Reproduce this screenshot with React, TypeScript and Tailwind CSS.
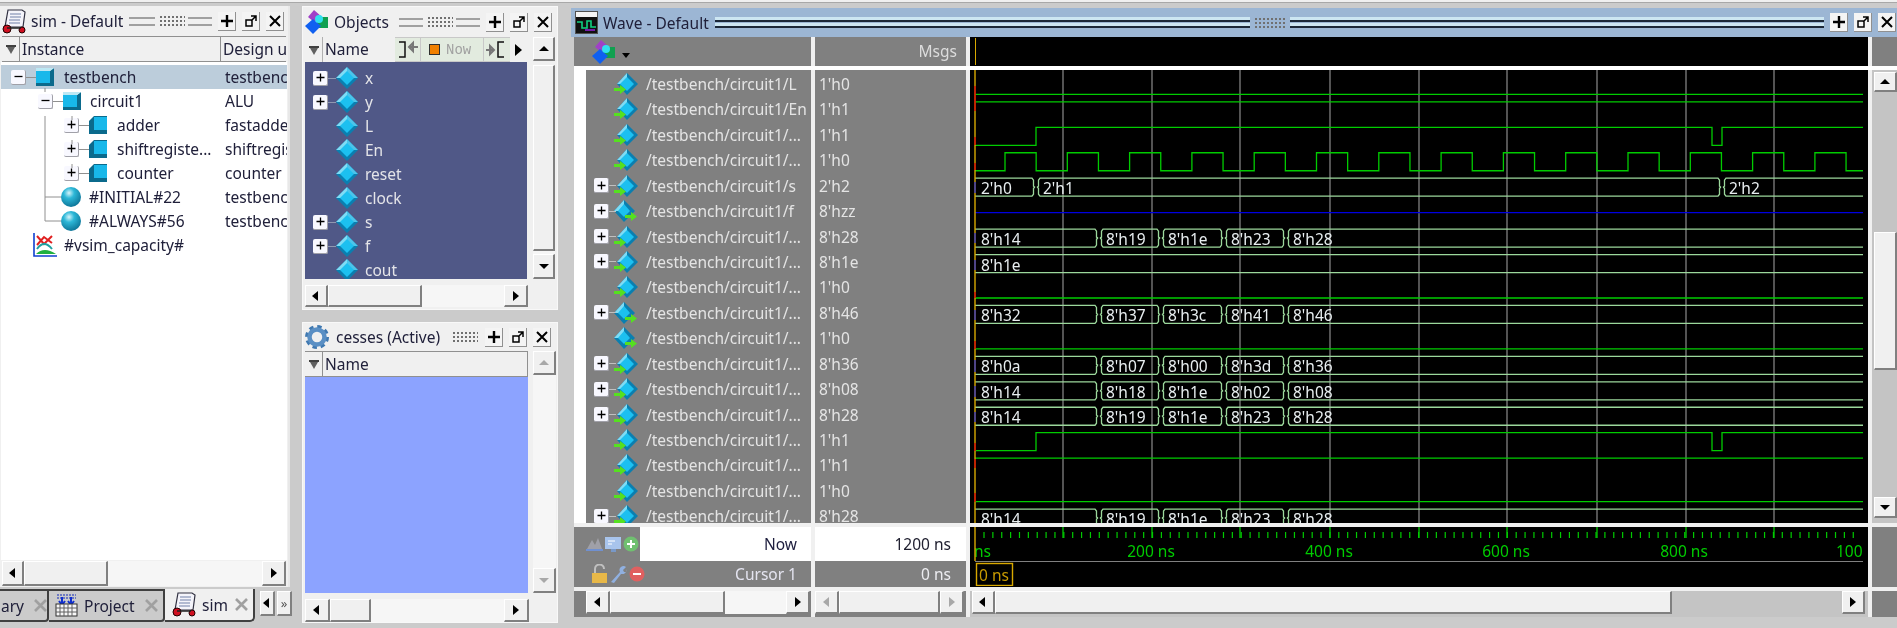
const GRID = [1064, 1153, 1241, 1331, 1420, 1508, 1598, 1687, 1775];
const END = 1864;

type Sig =
  | { kind: "low" | "high" | "z" }
  | { kind: "step" }
  | { kind: "clock" }
  | { kind: "bus"; parts: [number, string][] };

const busA = (p: string[]): [number, string][] => [
  [976, p[0]],
  [1100, p[1]],
  [1162, p[2]],
  [1225, p[3]],
  [1287, p[4]],
];

const ROWS: { name: string; value: string; box?: boolean; out?: boolean; sig: Sig }[] = [
  { name: "/testbench/circuit1/L", value: "1'h0", sig: { kind: "low" } },
  { name: "/testbench/circuit1/En", value: "1'h1", sig: { kind: "high" } },
  { name: "/testbench/circuit1/...", value: "1'h1", sig: { kind: "step" } },
  { name: "/testbench/circuit1/...", value: "1'h0", sig: { kind: "clock" } },
  { name: "/testbench/circuit1/s", value: "2'h2", box: true, sig: { kind: "bus", parts: [[976, "2'h0"], [1037, "2'h1"], [1723, "2'h2"]] } },
  { name: "/testbench/circuit1/f", value: "8'hzz", box: true, out: true, sig: { kind: "z" } },
  { name: "/testbench/circuit1/...", value: "8'h28", box: true, sig: { kind: "bus", parts: busA(["8'h14", "8'h19", "8'h1e", "8'h23", "8'h28"]) } },
  { name: "/testbench/circuit1/...", value: "8'h1e", box: true, sig: { kind: "bus", parts: [[976, "8'h1e"]] } },
  { name: "/testbench/circuit1/...", value: "1'h0", sig: { kind: "low" } },
  { name: "/testbench/circuit1/...", value: "8'h46", box: true, out: true, sig: { kind: "bus", parts: busA(["8'h32", "8'h37", "8'h3c", "8'h41", "8'h46"]) } },
  { name: "/testbench/circuit1/...", value: "1'h0", out: true, sig: { kind: "low" } },
  { name: "/testbench/circuit1/...", value: "8'h36", box: true, sig: { kind: "bus", parts: busA(["8'h0a", "8'h07", "8'h00", "8'h3d", "8'h36"]) } },
  { name: "/testbench/circuit1/...", value: "8'h08", box: true, sig: { kind: "bus", parts: busA(["8'h14", "8'h18", "8'h1e", "8'h02", "8'h08"]) } },
  { name: "/testbench/circuit1/...", value: "8'h28", box: true, sig: { kind: "bus", parts: busA(["8'h14", "8'h19", "8'h1e", "8'h23", "8'h28"]) } },
  { name: "/testbench/circuit1/...", value: "1'h1", sig: { kind: "step" } },
  { name: "/testbench/circuit1/...", value: "1'h1", sig: { kind: "high" } },
  { name: "/testbench/circuit1/...", value: "1'h0", sig: { kind: "low" } },
  { name: "/testbench/circuit1/...", value: "8'h28", box: true, sig: { kind: "bus", parts: busA(["8'h14", "8'h19", "8'h1e", "8'h23", "8'h28"]) } },
];

const CURSOR_MARKS: [number, number, string][] = [
  [86, 111, "#d00000"], [137, 145, "#d00000"], [163, 170, "#d00000"], [182, 193, "#3030c0"],
  [233, 243, "#3030c0"], [260, 270, "#3030c0"], [292, 298, "#d00000"], [310, 320, "#3030c0"],
  [341, 349, "#d00000"], [360, 372, "#3030c0"], [386, 397, "#3030c0"], [412, 422, "#3030c0"],
  [443, 451, "#d00000"], [459, 468, "#d00000"], [493, 502, "#d00000"],
];

const bevel =
  "bg-[#f0f0f0] border-t border-l border-r-2 border-b-2 border-t-white border-l-white border-r-[#808080] border-b-[#808080]";

function Arrow({ dir, off }: { dir: "l" | "r" | "u" | "d"; off?: boolean }) {
  const pts = { l: "8,1 8,11 2,6", r: "3,1 3,11 9,6", u: "1,8 11,8 6,3", d: "1,4 11,4 6,9" }[dir];
  return (
    <svg width="12" height="12" viewBox="0 0 12 12">
      <polygon points={pts} fill={off ? "#a8a8a8" : "#000"} />
    </svg>
  );
}

function ArrowBtn({ dir, off, className }: { dir: "l" | "r" | "u" | "d"; off?: boolean; className: string }) {
  return (
    <div className={`${bevel} flex items-center justify-center shrink-0 ${className}`}>
      <Arrow dir={dir} off={off} />
    </div>
  );
}

function PanelBtn({ type }: { type: "plus" | "pop" | "close" }) {
  return (
    <div className="w-[18px] h-[19px] bg-[#f4f4f4] border-r border-b border-[#909090] flex items-center justify-center shrink-0">
      <svg width="14" height="14" viewBox="0 0 14 14" fill="none" stroke="#000">
        {type === "plus" && <path d="M7 1v12M1 7h12" strokeWidth="2.4" />}
        {type === "close" && <path d="M2 2l10 10M12 2L2 12" strokeWidth="2" />}
        {type === "pop" && <path d="M2 6h6v6H2zM7 2h5v5M12 2L7 7" strokeWidth="1.5" />}
      </svg>
    </div>
  );
}

function Dots({ className }: { className: string }) {
  return <div className={`bg-[radial-gradient(#707070_0.8px,transparent_1px)] bg-[length:4px_4px] shrink-0 ${className}`} />;
}

function Lines({ className }: { className: string }) {
  return <div className={`h-[9px] border-t-2 border-b-2 border-[#a0a0a0] shrink-0 ${className}`} />;
}

function PanelBtns({ gap }: { gap: string }) {
  return (
    <div className={`flex ${gap}`}>
      <PanelBtn type="plus" />
      <PanelBtn type="pop" />
      <PanelBtn type="close" />
    </div>
  );
}

function Plus() {
  return (
    <div className="w-[15px] h-[15px] bg-[#f8f8ff] border-r border-b border-[#a0a0a8] rounded-[2px] flex items-center justify-center shrink-0">
      <svg width="9" height="9" viewBox="0 0 9 9" stroke="#000" strokeWidth="1.3">
        <path d="M4.5 0.5v8M0.5 4.5h8" />
      </svg>
    </div>
  );
}

function Minus() {
  return (
    <div className="w-[15px] h-[15px] bg-[#f8f8ff] border-r border-b border-[#a0a0a8] rounded-[2px] flex items-center justify-center shrink-0">
      <svg width="9" height="9" viewBox="0 0 9 9" stroke="#000" strokeWidth="1.3">
        <path d="M0.5 4.5h8" />
      </svg>
    </div>
  );
}

function Cube({ flip }: { flip?: boolean }) {
  return flip ? (
    <svg width="18" height="18" viewBox="0 0 18 18" className="shrink-0">
      <polygon points="5,0 18,0 18,18 0,18 0,5" fill="#0b6a8c" />
      <rect x="5" y="1" width="13" height="13" fill="#18b8ea" />
    </svg>
  ) : (
    <svg width="18" height="18" viewBox="0 0 18 18" className="shrink-0">
      <polygon points="0,3 14,3 18,0 18,18 0,18" fill="#0b6a8c" />
      <rect x="0" y="3" width="14" height="12" fill="#18b8ea" />
      <polygon points="0,0 18,0 14,3 0,3" fill="#bde8f4" />
    </svg>
  );
}

function Sphere({ id }: { id: string }) {
  return (
    <svg width="20" height="20" viewBox="0 0 20 20" className="shrink-0">
      <defs>
        <radialGradient id={id} cx="0.4" cy="0.3" r="0.75">
          <stop offset="0" stopColor="#d8f4fa" />
          <stop offset="0.35" stopColor="#2db8d8" />
          <stop offset="1" stopColor="#0a6f92" />
        </radialGradient>
      </defs>
      <circle cx="10" cy="10" r="10" fill={`url(#${id})`} />
    </svg>
  );
}

function Diamond() {
  return (
    <svg width="22" height="22" viewBox="0 0 22 22" className="shrink-0">
      <polygon points="11,0 22,11 11,22 0,11" fill="#0a7fb0" />
      <polygon points="11,0 0,11 5,11 11,5" fill="#7fdcf5" />
      <polygon points="11,0 22,11 17,11 11,5" fill="#4cc4ea" />
      <polygon points="11,4 18,11 11,18 4,11" fill="#1cc0f0" />
    </svg>
  );
}

function SignalIcon({ out }: { out?: boolean }) {
  return out ? (
    <svg width="24" height="24" viewBox="0 0 24 24" className="shrink-0">
      <polygon points="10,1 21,12 10,23 0,12" fill="#0a7fb0" />
      <polygon points="10,1 0,12 5,12 10,6" fill="#7fdcf5" />
      <polygon points="10,5 16,12 10,18 4,12" fill="#1cc0f0" />
      <path d="M11 16h6v-3l6 4.5-6 4.5v-3h-6z" fill="#55e020" />
    </svg>
  ) : (
    <svg width="24" height="24" viewBox="0 0 24 24" className="shrink-0">
      <polygon points="13,1 24,12 13,23 3,12" fill="#0a7fb0" />
      <polygon points="13,1 3,12 8,12 13,6" fill="#7fdcf5" />
      <polygon points="13,5 20,12 13,19 6,12" fill="#1cc0f0" />
      <path d="M0 16h6v-3l6 4.5-6 4.5v-3H0z" fill="#55e020" />
    </svg>
  );
}

function ObjectsIcon({ size = 24 }: { size?: number }) {
  return (
    <svg width={size} height={size} viewBox="0 0 24 24" className="shrink-0">
      <polygon points="9,0 17,7 9,12 3,7" fill="#a040c8" />
      <rect x="12" y="7" width="11" height="11" fill="#10a050" />
      <polygon points="8,9 16,16 8,24 0,16" fill="#1060f0" />
      <circle cx="14" cy="9" r="4" fill="#30e0f0" />
    </svg>
  );
}

function SimIcon() {
  return (
    <svg width="25" height="25" viewBox="0 0 25 25" className="shrink-0">
      <path d="M6 1h14l3 2-2 15H3z" fill="#f4f4fa" stroke="#303040" strokeWidth="1.2" />
      <path d="M8 5h11M8 8h11M7 11h11M7 14h11" stroke="#7080a8" strokeWidth="1.2" />
      <circle cx="5" cy="20" r="4" fill="#d01020" stroke="#200" />
      <circle cx="20" cy="21" r="3" fill="#d01020" stroke="#200" />
      <path d="M5 19h14" stroke="#202020" strokeWidth="1.5" />
    </svg>
  );
}

function ProjectIcon() {
  return (
    <svg width="23" height="23" viewBox="0 0 23 23" className="shrink-0">
      <path d="M2 1h19M2 4h19" stroke="#5060c0" strokeWidth="1.5" strokeDasharray="2 1" />
      <path d="M7 3v7M4 7l3 4 3-4M16 3v7M13 7l3 4 3-4" fill="none" stroke="#1030d0" strokeWidth="2" />
      <rect x="1" y="10" width="21" height="12" fill="#f8f8f8" stroke="#303030" />
      <path d="M1 14h21M1 18h21M5 10v12M9 10v12M13 10v12M17 10v12" stroke="#606060" />
    </svg>
  );
}

function CapacityIcon() {
  return (
    <svg width="24" height="24" viewBox="0 0 24 24" className="shrink-0">
      <path d="M1 0v23h23" fill="none" stroke="#1040d0" strokeWidth="1.6" />
      <path d="M4 3l7 8 8-8M4 12l7-8 8 6" fill="none" stroke="#e02020" strokeWidth="2" />
      <path d="M4 16q7-10 15 0" fill="none" stroke="#20a0a0" strokeWidth="2" />
      <path d="M3 21q8-8 20 0z" fill="#20b040" />
    </svg>
  );
}

function GearIcon() {
  return (
    <svg width="24" height="24" viewBox="0 0 24 24" className="shrink-0">
      <circle cx="12" cy="12" r="9.5" fill="none" stroke="#3f78b0" strokeWidth="5" strokeDasharray="4 3.45" />
      <circle cx="12" cy="12" r="7.5" fill="none" stroke="#5a8fc4" strokeWidth="4.5" />
    </svg>
  );
}

function WaveIcon() {
  return (
    <div className="w-[23px] h-[23px] bg-[#f4f4f4] border border-[#505050] flex flex-col justify-end shrink-0">
      <svg width="21" height="16" viewBox="0 0 21 16" className="bg-[#101010]">
        <path d="M1 5h5v6h5V4h4v6h5" fill="none" stroke="#10d080" strokeWidth="1.6" />
        <path d="M9 13h10" stroke="#9020d0" strokeWidth="1.6" />
      </svg>
    </div>
  );
}

function CloseX() {
  return (
    <svg width="13" height="13" viewBox="0 0 13 13" stroke="#a0a0a0" strokeWidth="2.6" className="shrink-0">
      <path d="M1 1l11 11M12 1L1 12" />
    </svg>
  );
}

function HeaderCaret() {
  return (
    <svg width="12" height="12" viewBox="0 0 12 12">
      <path d="M1 2h10v2H1z" fill="#404040" />
      <polygon points="2,4 10,4 6,11" fill="#606060" />
    </svg>
  );
}

function SimPanel() {
  const tree: { label: string; unit: string; pad: string; icon: React.ReactNode; box?: "plus" | "minus"; sel?: boolean; textPad: string }[] = [
    { label: "testbench", unit: "testbench", pad: "pl-[10px]", box: "minus", icon: <Cube />, sel: true, textPad: "ml-[10px]" },
    { label: "circuit1", unit: "ALU", pad: "pl-[37px]", box: "minus", icon: <Cube />, textPad: "ml-[9px]" },
    { label: "adder", unit: "fastadder", pad: "pl-[63px]", box: "plus", icon: <Cube flip />, textPad: "ml-[10px]" },
    { label: "shiftregiste...", unit: "shiftregister", pad: "pl-[63px]", box: "plus", icon: <Cube flip />, textPad: "ml-[10px]" },
    { label: "counter", unit: "counter", pad: "pl-[63px]", box: "plus", icon: <Cube flip />, textPad: "ml-[10px]" },
    { label: "#INITIAL#22", unit: "testbench", pad: "pl-[60px]", icon: <Sphere id="s1" />, textPad: "ml-[8px]" },
    { label: "#ALWAYS#56", unit: "testbench", pad: "pl-[60px]", icon: <Sphere id="s2" />, textPad: "ml-[8px]" },
    { label: "#vsim_capacity#", unit: "", pad: "pl-[32px]", icon: <CapacityIcon />, textPad: "ml-[7px]" },
  ];

  return (
    <div className="w-[290px] flex flex-col shrink-0">
      <div className="bg-[#f0f0f0] border-r-2 border-[#e8e8e8]">
        <div className="h-[30px] flex items-center pl-[2px] pr-[4px]">
          <SimIcon />
          <span className="ml-[4px] w-[92px] shrink-0 whitespace-nowrap">sim - Default</span>
          <Lines className="w-[26px] ml-[6px]" />
          <Dots className="w-[26px] h-[12px] ml-[4px]" />
          <Lines className="w-[24px] ml-[3px]" />
          <div className="ml-[6px]">
            <PanelBtns gap="gap-[6px]" />
          </div>
        </div>
        <div className="h-[26px] flex border-y border-[#909090] ml-[2px] mr-[2px]">
          <div className="w-[18px] flex items-center justify-center border-r border-[#909090] shrink-0">
            <HeaderCaret />
          </div>
          <div className="w-[201px] pl-[2px] border-r border-[#909090] shrink-0">Instance</div>
          <div className="flex-1 pl-[2px] overflow-hidden whitespace-nowrap">Design ur</div>
        </div>
        <div className="relative h-[498px] bg-white pt-[3px] ml-[1px] mr-[1px] overflow-hidden">
          {tree.map((r) => (
            <div key={r.label} className={`h-[24px] flex items-center ${r.pad} ${r.sel ? "bg-[#bccddb]" : ""}`}>
              <div className="w-[220px] shrink-0 flex items-center whitespace-nowrap -mr-[100px]">
                {r.box === "plus" && <Plus />}
                {r.box === "minus" && <Minus />}
                {r.box && <span className="w-[10px] h-px bg-[#909090] shrink-0" />}
                {r.icon}
                <span className={r.textPad}>{r.label}</span>
              </div>
            </div>
          ))}
          <div className="absolute top-[3px] left-[224px] right-0 overflow-hidden">
            {tree.map((r) => (
              <div key={r.label} className="h-[24px] flex items-center whitespace-nowrap">{r.unit}</div>
            ))}
          </div>
          <svg className="absolute left-0 top-0" width="120" height="190" viewBox="0 62 120 190" fill="none" stroke="#909090">
            <path d="M44 88v4M44 116v105M44 197h16M44 221h16M71 116v4M71 140v4M71 164v4" />
          </svg>
        </div>
        <div className="h-[27px] flex p-[1px] pr-[2px] pl-[2px]">
          <ArrowBtn dir="l" className="w-[22px]" />
          <div className={`${bevel} w-[84px] shrink-0`} />
          <div className="flex-1 bg-[#f6f6f6]" />
          <ArrowBtn dir="r" className="w-[24px]" />
        </div>
      </div>
      <div className="h-[33px] mt-[2px] flex items-stretch">
        <div className="w-[49px] border-t-2 border-b-2 border-r-2 border-[#404040] rounded-br-[4px] flex items-center pl-[1px] shrink-0">
          <span>ary</span>
          <span className="ml-[10px]"><CloseX /></span>
        </div>
        <div className="w-[116px] border-t-2 border-b-2 border-r-2 border-[#404040] rounded-br-[4px] flex items-center pl-[6px] shrink-0">
          <ProjectIcon />
          <span className="ml-[6px] w-[58px]">Project</span>
          <span className="ml-[3px]"><CloseX /></span>
        </div>
        <div className="w-[90px] bg-[#f0f0f0] border-b-2 border-r-2 border-[#404040] rounded-br-[5px] flex items-center pl-[7px] shrink-0">
          <SimIcon />
          <span className="ml-[5px] w-[30px]">sim</span>
          <span className="ml-[3px]"><CloseX /></span>
        </div>
        <div className="flex ml-[5px] mt-[2px] mb-[6px] gap-[2px]">
          <ArrowBtn dir="l" className="w-[15px]" />
          <div className={`${bevel} w-[15px] flex items-center justify-center text-[#555] text-[13px] leading-none`}>»</div>
        </div>
      </div>
    </div>
  );
}

function ObjectsPanel() {
  const rows = [
    { n: "x", box: true },
    { n: "y", box: true },
    { n: "L" },
    { n: "En" },
    { n: "reset" },
    { n: "clock" },
    { n: "s", box: true },
    { n: "f", box: true },
    { n: "cout" },
  ];
  return (
    <div className="h-[304px] bg-[#f0f0f0] border border-[#f8f8f8] px-[2px] shrink-0">
      <div className="h-[30px] flex items-center">
        <ObjectsIcon />
        <span className="ml-[5px] w-[58px] shrink-0">Objects</span>
        <Lines className="w-[24px] ml-[7px]" />
        <Dots className="w-[26px] h-[12px] ml-[4px]" />
        <Lines className="w-[24px] ml-[3px]" />
        <div className="ml-[6px]">
          <PanelBtns gap="gap-[6px]" />
        </div>
      </div>
      <div className="flex h-[242px]">
        <div className="w-[222px] shrink-0 flex flex-col">
          <div className="h-[25px] flex items-stretch shrink-0">
            <div className="w-[18px] flex items-center justify-center border-r border-[#b0b0b0] shrink-0">
              <HeaderCaret />
            </div>
            <div className="w-[72px] pl-[2px] shrink-0">Name</div>
            <div className="w-[115px] flex bg-[#e2ebdf] border-y border-[#c8c8c8] items-center shrink-0">
              <svg width="25" height="22" viewBox="0 0 25 22" className="shrink-0" fill="none">
                <path d="M4 18h6V3h-6" stroke="#111" strokeWidth="1.5" />
                <path d="M14 8h9M14 8l4-4v8z" stroke="#777" strokeWidth="2" />
              </svg>
              <div className="w-[64px] flex items-center border-x border-[#c8c8c8] h-full pl-[8px] shrink-0">
                <span className="w-[11px] h-[11px] bg-[#f08000] border border-[#303030] shrink-0" />
                <span className="ml-[6px] font-['Liberation_Mono',monospace] text-[#a0a0a0] text-[14px]">Now</span>
              </div>
              <svg width="25" height="22" viewBox="0 0 25 22" className="shrink-0" fill="none">
                <path d="M2 11h8M10 11l-4-4v8z" stroke="#777" strokeWidth="2" />
                <path d="M20 3h-6v15h6" stroke="#111" strokeWidth="1.5" />
              </svg>
            </div>
            <div className="flex-1 flex items-center justify-center">
              <svg width="9" height="14" viewBox="0 0 9 14"><polygon points="1,1 8,7 1,13" fill="#000" /></svg>
            </div>
          </div>
          <div className="flex-1 bg-[#505887] pt-[4px] text-[#e4e4e8] overflow-hidden">
            {rows.map((r) => (
              <div key={r.n} className="h-[24px] flex items-center relative">
                {r.box && (
                  <div className="absolute left-[8px] flex items-center">
                    <Plus />
                    <span className="w-[8px] h-px bg-[#9098b0]" />
                  </div>
                )}
                <div className="ml-[31px]"><Diamond /></div>
                <span className="ml-[7px]">{r.n}</span>
              </div>
            ))}
          </div>
        </div>
        <div className="w-[6px] shrink-0" />
        <div className="w-[22px] flex flex-col shrink-0">
          <ArrowBtn dir="u" className="h-[24px]" />
          <div className={`${bevel} mt-[4px] h-[186px] shrink-0`} />
          <div className="flex-1 bg-[#f6f6f6]" />
          <ArrowBtn dir="d" className="h-[25px]" />
        </div>
      </div>
      <div className="h-[22px] mt-[6px] flex w-[223px]">
        <ArrowBtn dir="l" className="w-[23px]" />
        <div className={`${bevel} w-[94px] shrink-0`} />
        <div className="flex-1 bg-[#f6f6f6]" />
        <ArrowBtn dir="r" className="w-[24px]" />
      </div>
    </div>
  );
}

function ProcessesPanel() {
  return (
    <div className="h-[301px] bg-[#f0f0f0] border border-[#f8f8f8] px-[2px] shrink-0">
      <div className="h-[28px] flex items-center">
        <GearIcon />
        <span className="ml-[7px] w-[110px] shrink-0 whitespace-nowrap overflow-hidden">cesses (Active)</span>
        <Dots className="w-[26px] h-[12px] ml-[6px]" />
        <div className="ml-[7px]">
          <PanelBtns gap="gap-[6px]" />
        </div>
      </div>
      <div className="flex h-[242px]">
        <div className="w-[223px] shrink-0 flex flex-col">
          <div className="h-[26px] flex border-y border-r border-[#909090] shrink-0">
            <div className="w-[18px] flex items-center justify-center border-r border-[#909090] shrink-0">
              <HeaderCaret />
            </div>
            <div className="pl-[2px]">Name</div>
          </div>
          <div className="flex-1 bg-[#8ca3ff]" />
        </div>
        <div className="w-[5px] shrink-0" />
        <div className="w-[23px] flex flex-col shrink-0">
          <ArrowBtn dir="u" off className="h-[24px]" />
          <div className="flex-1 bg-[#f6f6f6]" />
          <ArrowBtn dir="d" off className="h-[25px]" />
        </div>
      </div>
      <div className="h-[23px] mt-[6px] flex w-[224px]">
        <ArrowBtn dir="l" className="w-[25px]" />
        <div className={`${bevel} w-[41px] shrink-0`} />
        <div className="flex-1 bg-[#f6f6f6]" />
        <ArrowBtn dir="r" className="w-[25px]" />
      </div>
    </div>
  );
}

function pt(y: number) {
  return 76.4 + 25.45 * y;
}

function BusRow({ row, parts }: { row: number; parts: [number, string][] }) {
  const top = pt(row);
  const bot = top + 18;
  const mid = top + 9;
  return (
    <g>
      {parts.map(([x, label], i) => {
        const next = i + 1 < parts.length ? parts[i + 1][0] : null;
        // each value is drawn as a top and a bottom half that pinch in at the change
        const half = (edge: number, inner: number) => {
          const start = i === 0 ? `M${x} ${edge}` : `M${x + 1} ${mid}L${x + 2.5} ${inner}L${x + 2.5} ${edge === top ? edge + 2 : edge - 2}L${x + 4} ${edge}`;
          const stop = next === null ? `L${END} ${edge}` : `L${next - 4} ${edge}L${next - 2.5} ${edge === top ? edge + 2 : edge - 2}L${next - 2.5} ${inner}L${next - 1} ${mid}`;
          return start + stop;
        };
        return (
          <g key={x}>
            <path d={half(top, mid - 1)} fill="none" stroke="#9cd89c" strokeWidth="1.3" />
            <path d={half(bot, mid + 1)} fill="none" stroke="#9cd89c" strokeWidth="1.3" />
            <text x={i === 0 ? x + 6 : x + 7} y={top + 16} fill="#e8eef0" fontSize="15.5">
              {label}
            </text>
          </g>
        );
      })}
    </g>
  );
}

function clockPath(high: number, low: number) {
  let d = `M976 ${low}`;
  let x = 1006;
  let up = true;
  while (x < END) {
    d += `H${x}V${up ? high : low}`;
    up = !up;
    x += 31.15;
  }
  return d + `H${END}`;
}

function Waves() {
  return (
    <svg width="898" height="453" viewBox="971 70 898 453" className="block">
      {GRID.map((x) => (
        <path key={x} d={`M${x} 70V523`} stroke="#8c8c8c" strokeWidth="1.2" />
      ))}
      {ROWS.map((r, i) => {
        const hi = pt(i);
        const lo = hi + 18;
        const s = r.sig;
        if (s.kind === "low") return <path key={i} d={`M976 ${lo}H${END}`} stroke="#00cc00" strokeWidth="1.3" />;
        if (s.kind === "high") return <path key={i} d={`M976 ${hi}H${END}`} stroke="#00cc00" strokeWidth="1.3" />;
        if (s.kind === "z") return <path key={i} d={`M976 ${hi + 9}H${END}`} stroke="#0000e0" strokeWidth="1.3" />;
        if (s.kind === "step")
          return (
            <path
              key={i}
              d={`M976 ${lo}H1037V${hi}H1713V${lo}H1723V${hi}H${END}`}
              fill="none"
              stroke="#00cc00"
              strokeWidth="1.3"
            />
          );
        if (s.kind === "clock") return <path key={i} d={clockPath(hi, lo)} fill="none" stroke="#00cc00" strokeWidth="1.3" />;
        return <BusRow key={i} row={i} parts={s.parts} />;
      })}
      <path d="M976 70V523" stroke="#d8a800" strokeWidth="1.4" />
      {CURSOR_MARKS.map(([a, b, c]) => (
        <path key={a} d={`M976 ${a}V${b}`} stroke={c} strokeWidth="1.4" />
      ))}
    </svg>
  );
}

function Timeline() {
  const minor: number[] = [];
  for (let x = 985; x < 1860; x += 8.87) minor.push(x);
  return (
    <svg width="898" height="59" viewBox="971 526 898 59" className="block">
      <defs>
        <clipPath id="tl">
          <rect x="976" y="526" width="888" height="59" />
        </clipPath>
      </defs>
      {minor.map((x) => (
        <path key={x} d={`M${x} 531V537`} stroke="#00cc00" strokeWidth="1.2" />
      ))}
      {GRID.map((x) => (
        <path key={x} d={`M${x} 526V537`} stroke="#00cc00" strokeWidth="1.3" />
      ))}
      <g clipPath="url(#tl)" fill="#00cc00" fontSize="15.5" textAnchor="middle">
        <text x="962" y="556" textAnchor="start">0 ns</text>
        <text x="1152" y="556">200 ns</text>
        <text x="1330" y="556">400 ns</text>
        <text x="1507" y="556">600 ns</text>
        <text x="1685" y="556">800 ns</text>
        <text x="1837" y="556" textAnchor="start">1000 ns</text>
      </g>
      <path d="M976 560.5H1864" stroke="#808080" strokeWidth="1.2" />
      <path d="M976 526V560" stroke="#d8a800" strokeWidth="1.4" />
      <rect x="977.5" y="562.5" width="36" height="22" fill="none" stroke="#d8a800" strokeWidth="1.4" />
      <text x="980" y="580" fill="#c89a00" fontSize="15.5">0 ns</text>
    </svg>
  );
}

function TitleStripes() {
  return (
    <div className="flex-1 flex flex-col gap-[1px]">
      <div className="h-[5px] bg-[#cde6f2] border-b-2 border-[#1c2838]" />
      <div className="h-[5px] bg-[#cde6f2] border-b-2 border-[#1c2838]" />
    </div>
  );
}

function WavePanel() {
  return (
    <div className="flex-1 flex flex-col min-w-0 h-[612px]">
      <div className="h-[29px] bg-[#9cb6d4] flex items-center pl-[4px] pr-[1px] shrink-0">
        <WaveIcon />
        <span className="ml-[5px] w-[112px] shrink-0 whitespace-nowrap">Wave - Default</span>
        <div className="flex-1 flex items-center">
          <TitleStripes />
          <Dots className="w-[32px] h-[12px] mx-[4px]" />
          <TitleStripes />
        </div>
        <div className="ml-[6px]">
          <PanelBtns gap="gap-[6px]" />
        </div>
      </div>

      {/* column heads */}
      <div className="h-[29px] flex shrink-0">
        <div className="w-[237px] ml-[3px] bg-[#808080] flex items-center pl-[18px] shrink-0">
          <ObjectsIcon />
          <svg width="8" height="5" viewBox="0 0 8 5" className="ml-[6px] mt-[8px]"><polygon points="0,0 8,0 4,5" fill="#000" /></svg>
        </div>
        <div className="w-[4px] bg-[#f0f0f0] shrink-0" />
        <div className="w-[151px] bg-[#808080] text-right pr-[9px] text-[#dcdcdc] leading-[29px] shrink-0">Msgs</div>
        <div className="w-[4px] bg-[#f0f0f0] shrink-0" />
        <div className="w-[898px] bg-black relative shrink-0">
          <div className="absolute left-[5px] top-[1px] bottom-[1px] w-[1.4px] bg-[#d8a800]" />
        </div>
        <div className="w-[4px] bg-[#f0f0f0] shrink-0" />
        <div className="flex-1 bg-[#808080]" />
      </div>
      <div className="h-[4px] bg-white ml-[3px] shrink-0" />

      {/* signal rows */}
      <div className="h-[453px] flex shrink-0">
        <div className="w-[237px] ml-[3px] bg-[#808080] border-l-[12px] border-l-white text-[#e4e4e4] overflow-hidden shrink-0">
          <div className="pt-[1.2px]">
            {ROWS.map((r, i) => (
              <div key={i} className="h-[25.45px] flex items-center relative whitespace-nowrap">
                {r.box && (
                  <div className="absolute left-[8px] flex items-center">
                    <Plus />
                    <span className="w-[7px] h-px bg-[#c0c0c0]" />
                  </div>
                )}
                <div className="ml-[28px]"><SignalIcon out={r.out} /></div>
                <span className="ml-[8px]">{r.name}</span>
              </div>
            ))}
          </div>
        </div>
        <div className="w-[4px] bg-[#f0f0f0] shrink-0" />
        <div className="w-[151px] bg-[#808080] text-[#e4e4e4] pl-[4px] pt-[1.2px] overflow-hidden shrink-0">
          {ROWS.map((r, i) => (
            <div key={i} className="h-[25.45px] flex items-center">{r.value}</div>
          ))}
        </div>
        <div className="w-[4px] bg-[#f0f0f0] shrink-0" />
        <div className="w-[898px] bg-black shrink-0">
          <Waves />
        </div>
        <div className="w-[4px] bg-[#f0f0f0] shrink-0" />
        <div className="flex-1 flex flex-col bg-[#c4c4c4] pl-[2px]">
          <div className="h-[2px]" />
          <ArrowBtn dir="u" className="h-[20px]" />
          <div className="h-[140px]" />
          <div className={`${bevel} h-[138px]`} />
          <div className="flex-1" />
          <ArrowBtn dir="d" className="h-[21px] mb-[5px]" />
        </div>
      </div>
      <div className="h-[4px] bg-[#f0f0f0] ml-[3px] shrink-0" />

      {/* now and cursor rows */}
      <div className="h-[60px] flex shrink-0">
        <div className="w-[237px] ml-[3px] flex flex-col shrink-0">
          <div className="h-[34px] flex">
            <div className="w-[66px] bg-[#808080] flex items-center pl-[12px] gap-[1px] shrink-0">
              <svg width="17" height="16" viewBox="0 0 17 16"><path d="M1 13l5-9 3 5 3-7 4 11z" fill="#a0a0a8" /><path d="M0 14h17" stroke="#7090d0" strokeWidth="2" /></svg>
              <svg width="18" height="18" viewBox="0 0 18 18"><rect x="1" y="2" width="16" height="12" fill="#a8c4ec" /><path d="M4 6h7M4 9h4" stroke="#fff" /><path d="M7 14h5v3H7z" fill="#7898c8" /></svg>
              <svg width="16" height="16" viewBox="0 0 16 16"><circle cx="8" cy="8" r="7.5" fill="#70c070" /><path d="M4 8h8M8 4v8" stroke="#fff" strokeWidth="2" /></svg>
            </div>
            <div className="flex-1 bg-white text-right pr-[14px] leading-[34px] text-[#202040]">Now</div>
          </div>
          <div className="flex-1 bg-[#808080] flex items-center pl-[17px] gap-[1px]">
            <svg width="17" height="20" viewBox="0 0 17 20"><path d="M4 9V5a4.5 4.5 0 019 0" fill="none" stroke="#c0c0c0" strokeWidth="2" /><rect x="1" y="9" width="15" height="10" fill="#e8b848" /></svg>
            <svg width="19" height="19" viewBox="0 0 19 19"><path d="M2 17L11 7a4 4 0 016-5l-3 3 1 2 2 0 1-3a5 5 0 01-6 5L5 18z" fill="#90b0e0" /></svg>
            <svg width="16" height="16" viewBox="0 0 16 16"><circle cx="8" cy="8" r="7.5" fill="#e06060" /><path d="M4 8h8" stroke="#fff" strokeWidth="2" /></svg>
            <span className="flex-1 text-right pr-[14px] text-[#e4e4f0]">Cursor 1</span>
          </div>
        </div>
        <div className="w-[4px] bg-[#f0f0f0] shrink-0" />
        <div className="w-[151px] flex flex-col shrink-0">
          <div className="h-[34px] bg-white text-right pr-[15px] leading-[34px] text-[#202030]">1200 ns</div>
          <div className="flex-1 bg-[#808080] text-right pr-[15px] leading-[26px] text-[#ececf0]">0 ns</div>
        </div>
        <div className="w-[4px] bg-[#f0f0f0] shrink-0" />
        <div className="w-[898px] bg-black shrink-0">
          <Timeline />
        </div>
        <div className="w-[4px] bg-[#f0f0f0] shrink-0" />
        <div className="flex-1 bg-[#808080]" />
      </div>
      <div className="h-[4px] bg-[#f0f0f0] ml-[3px] shrink-0" />

      {/* scrollbars */}
      <div className="h-[26px] flex shrink-0">
        <div className="w-[237px] ml-[3px] bg-[#808080] flex pl-[12px] pr-[1px] pb-[3px] shrink-0">
          <ArrowBtn dir="l" className="w-[24px]" />
          <div className={`${bevel} w-[115px] shrink-0`} />
          <div className="flex-1 bg-[#f6f6f6]" />
          <ArrowBtn dir="r" className="w-[24px]" />
        </div>
        <div className="w-[4px] bg-[#f0f0f0] shrink-0" />
        <div className="w-[151px] bg-[#808080] flex pb-[3px] pr-[2px] shrink-0">
          <ArrowBtn dir="l" off className="w-[24px]" />
          <div className={`${bevel} flex-1`} />
          <ArrowBtn dir="r" off className="w-[24px]" />
        </div>
        <div className="w-[4px] bg-[#f0f0f0] shrink-0" />
        <div className="w-[898px] bg-[#c4c4c4] flex pb-[3px] pl-[2px] pr-[3px] shrink-0">
          <ArrowBtn dir="l" className="w-[23px]" />
          <div className={`${bevel} w-[677px] shrink-0`} />
          <div className="flex-1" />
          <ArrowBtn dir="r" className="w-[23px]" />
        </div>
        <div className="w-[4px] bg-[#f0f0f0] shrink-0" />
        <div className="flex-1 bg-[#808080]" />
      </div>
    </div>
  );
}

export default function App() {
  return (
    <div className="w-[1897px] h-[628px] bg-[#cbcbcb] overflow-hidden flex flex-col font-['Noto_Sans',sans-serif] text-[15.5px] leading-[24px] text-[#20203a] blur-[0.4px]">
      <div className="h-[3px] bg-[#f0f0f0] border-b border-[#a8a8a8] shrink-0" />
      <div className="flex flex-1 pt-[3px]">
        <SimPanel />
        <div className="w-[12px] shrink-0" />
        <div className="w-[256px] flex flex-col gap-[12px] shrink-0">
          <ObjectsPanel />
          <ProcessesPanel />
        </div>
        <div className="w-[13px] shrink-0" />
        <div className="flex-1 min-w-0 pt-[2px]">
          <WavePanel />
        </div>
      </div>
    </div>
  );
}
